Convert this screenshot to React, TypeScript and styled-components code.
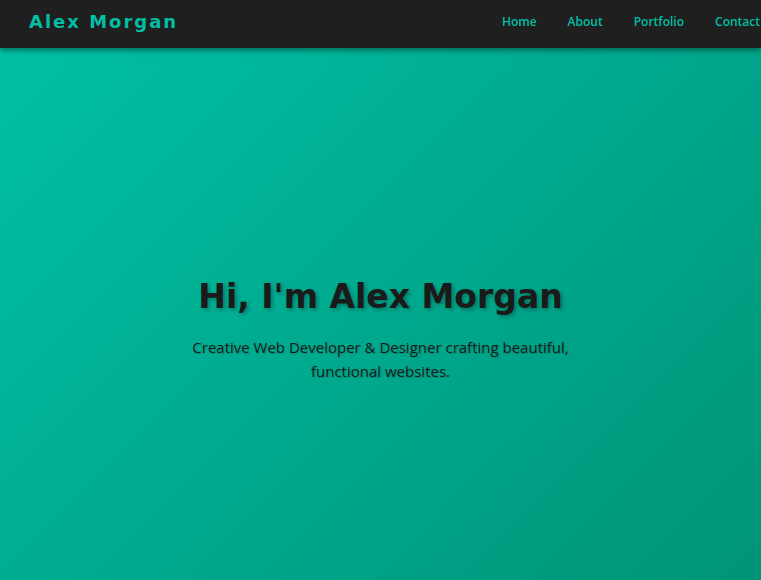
import React from "react";
import styled, { createGlobalStyle } from "styled-components";

const Global = createGlobalStyle`
  html, body { margin: 0; padding: 0; overflow: hidden; }
  body { font-family: "Open Sans", "Liberation Sans", sans-serif; background: #009477; }
  * { box-sizing: border-box; }
`;

const Header = styled.header`
  position: relative;
  z-index: 2;
  height: 48px;
  background: #1f1f1f;
  box-shadow: 0 2px 6px rgba(0, 0, 0, 0.45);
  display: flex;
  align-items: center;
  justify-content: space-between;
  padding: 0 1px 5px 29px;
`;

const Logo = styled.div`
  font-family: "DejaVu Sans", sans-serif;
  font-weight: 700;
  font-size: 18px;
  letter-spacing: 2px;
  color: #00bfa5;
`;

const Nav = styled.nav`
  display: flex;
  gap: 31px;
`;

const NavLink = styled.a`
  font-family: "Open Sans", sans-serif;
  font-size: 12px;
  font-weight: 600;
  color: #00bfa5;
  text-decoration: none;
`;

const Hero = styled.section`
  height: calc(100vh - 48px);
  background: linear-gradient(135deg, #00bfa5 0%, #009477 100%);
  display: flex;
  flex-direction: column;
  align-items: center;
  justify-content: center;
  text-align: center;
  padding-top: 31px;
`;

const Title = styled.h1`
  margin: 0 0 17px;
  font-family: "DejaVu Sans", sans-serif;
  font-weight: 700;
  font-size: 33px;
  line-height: 1.3;
  color: #1a1a1a;
  text-shadow: 2px 2px 4px rgba(0, 0, 0, 0.3);
`;

const Subtitle = styled.p`
  margin: 0;
  max-width: 400px;
  font-size: 15px;
  line-height: 24px;
  color: #1a1a1a;
  text-shadow: 1px 1px 2px rgba(0, 0, 0, 0.2);
`;

export default function App() {
  return (
    <>
      <Global />
      <Header>
        <Logo>Alex Morgan</Logo>
        <Nav>
          <NavLink href="#">Home</NavLink>
          <NavLink href="#">About</NavLink>
          <NavLink href="#">Portfolio</NavLink>
          <NavLink href="#">Contact</NavLink>
        </Nav>
      </Header>
      <Hero>
        <Title>Hi, I'm Alex Morgan</Title>
        <Subtitle>
          Creative Web Developer &amp; Designer crafting beautiful, functional websites.
        </Subtitle>
      </Hero>
    </>
  );
}
